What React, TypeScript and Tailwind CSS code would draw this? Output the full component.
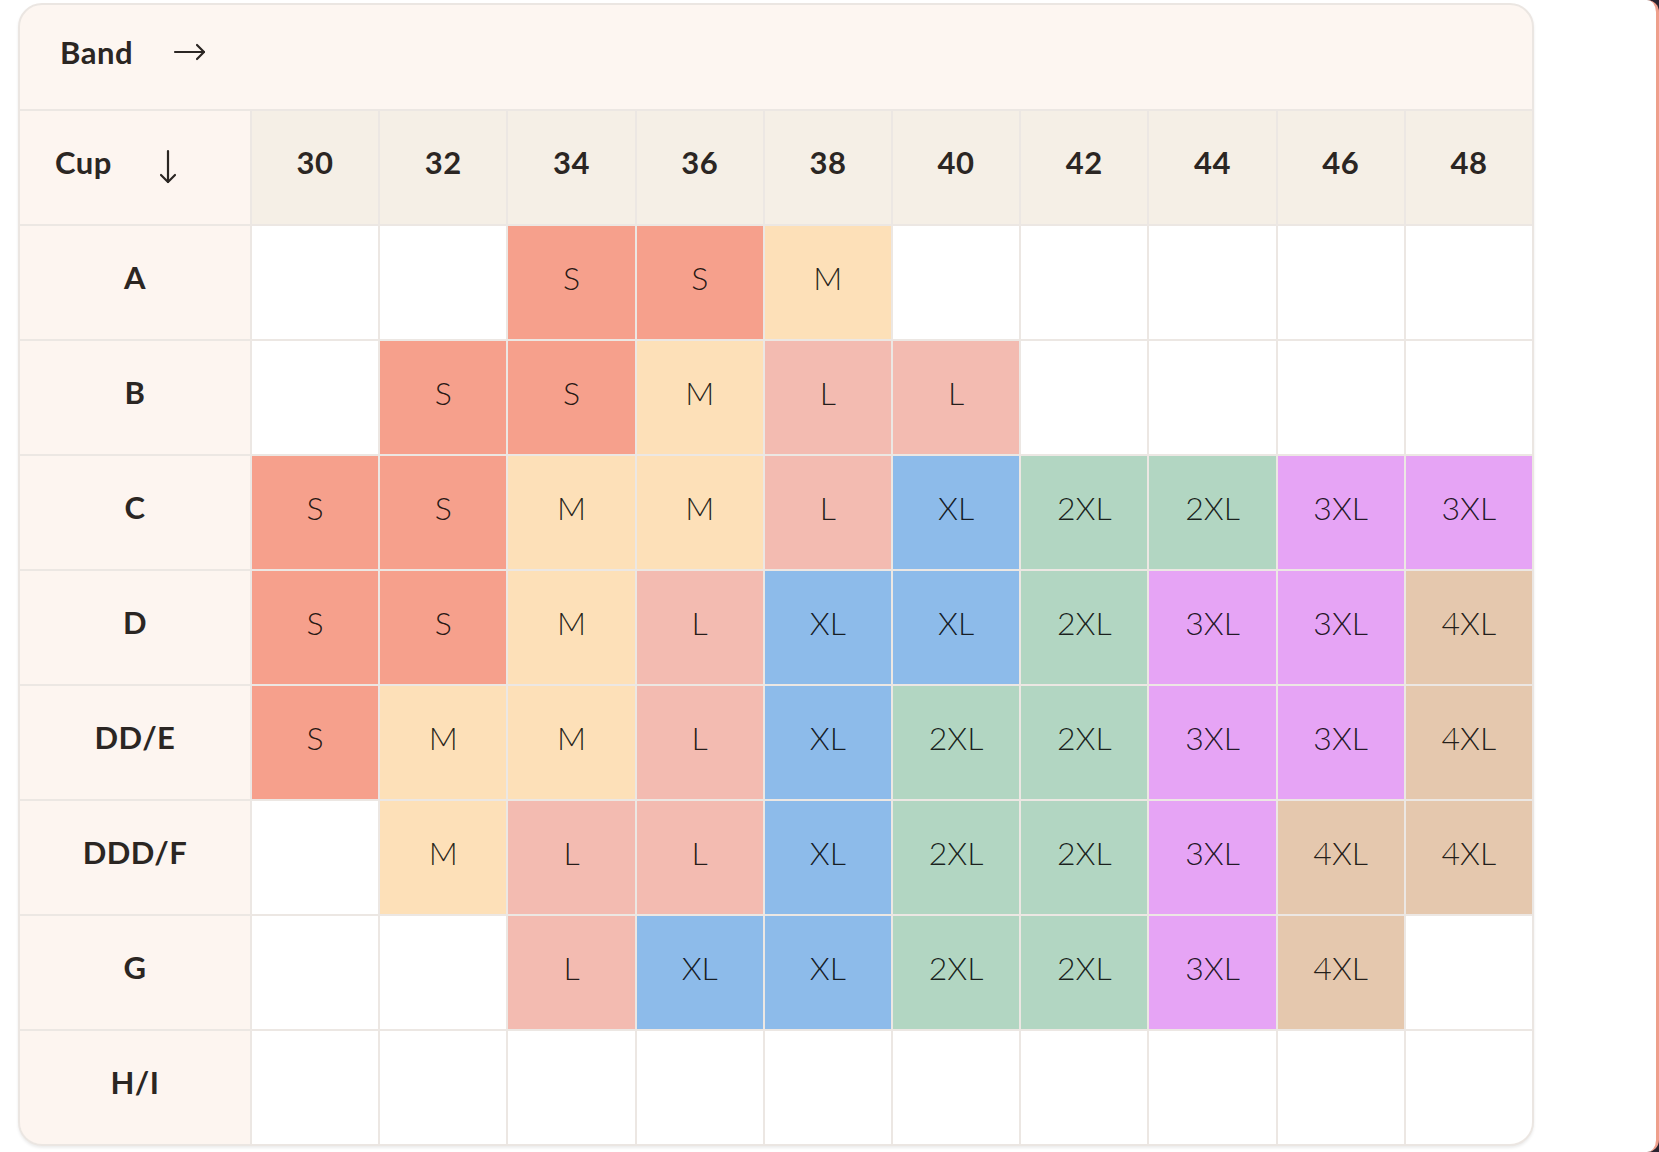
import React from "react";

const bands = ["30", "32", "34", "36", "38", "40", "42", "44", "46", "48"];

const rows: { cup: string; sizes: string[] }[] = [
  { cup: "A", sizes: ["", "", "S", "S", "M", "", "", "", "", ""] },
  { cup: "B", sizes: ["", "S", "S", "M", "L", "L", "", "", "", ""] },
  { cup: "C", sizes: ["S", "S", "M", "M", "L", "XL", "2XL", "2XL", "3XL", "3XL"] },
  { cup: "D", sizes: ["S", "S", "M", "L", "XL", "XL", "2XL", "3XL", "3XL", "4XL"] },
  { cup: "DD/E", sizes: ["S", "M", "M", "L", "XL", "2XL", "2XL", "3XL", "3XL", "4XL"] },
  { cup: "DDD/F", sizes: ["", "M", "L", "L", "XL", "2XL", "2XL", "3XL", "4XL", "4XL"] },
  { cup: "G", sizes: ["", "", "L", "XL", "XL", "2XL", "2XL", "3XL", "4XL", ""] },
  { cup: "H/I", sizes: ["", "", "", "", "", "", "", "", "", ""] },
];

const sizeColors: Record<string, string> = {
  S: "bg-[#f6a08c]",
  M: "bg-[#fde0b8]",
  L: "bg-[#f3bbb1]",
  XL: "bg-[#8dbbea]",
  "2XL": "bg-[#b2d6c2]",
  "3XL": "bg-[#e6a4f5]",
  "4XL": "bg-[#e5c8ae]",
};

function ArrowRight() {
  return (
    <svg width="34" height="18" viewBox="0 0 34 18" fill="none" stroke="#2b2623" strokeWidth="2.2" strokeLinecap="round" strokeLinejoin="round">
      <path d="M2 9h29" />
      <path d="M24 2l7 7-7 7" />
    </svg>
  );
}

function ArrowDown() {
  return (
    <svg width="20" height="36" viewBox="0 0 20 36" fill="none" stroke="#2b2623" strokeWidth="2.2" strokeLinecap="round" strokeLinejoin="round">
      <path d="M10 2v31" />
      <path d="M3 26l7 7 7-7" />
    </svg>
  );
}

export default function App() {
  return (
    <div className="min-h-[1152px] w-[1659px] bg-[#2a2430]" style={{ fontFamily: "Lato, 'Open Sans', sans-serif" }}>
      <div className="min-h-[1152px] bg-white rounded-tr-[12px] rounded-br-[12px] border-r-[3px] border-[#ef9f8c] pl-[18px] pt-[3px]">
        <div className="w-[1516px] rounded-[24px] border-2 border-[#ebe6e2] bg-[#fdf6f1] overflow-hidden shadow-[0_2px_3px_rgba(0,0,0,0.08)]">
          <div className="h-[104px] flex items-center gap-[40px] pl-[40px] pb-[10px]">
            <span className="text-[31px] font-bold text-[#2b2623] tracking-[0.5px]">Band</span>
            <ArrowRight />
          </div>
          <div className="grid grid-cols-[230px_repeat(10,1fr)] auto-rows-[113px] gap-[2px] bg-[#ece7e3] pt-[2px]">
            <div className="bg-[#fdf5f0] flex items-center pl-[35px] gap-[46px] pb-[10px]">
              <span className="text-[31px] font-bold text-[#2b2623] tracking-[0.5px]">Cup</span>
              <span className="pt-[8px]">
                <ArrowDown />
              </span>
            </div>
            {bands.map((b) => (
              <div key={b} className="bg-[#f5efe6] flex items-center justify-center pb-[10px] text-[31px] font-bold text-[#2b2623] tracking-[0.5px]">
                {b}
              </div>
            ))}
            {rows.map((row) => (
              <React.Fragment key={row.cup}>
                <div className="bg-[#fdf5f0] flex items-center justify-center pb-[10px] text-[31px] font-bold text-[#2b2623] tracking-[0.5px]">
                  {row.cup}
                </div>
                {row.sizes.map((s, i) => (
                  <div
                    key={row.cup + i}
                    className={`flex items-center justify-center pb-[10px] text-[32px] font-light text-black/85 ${s ? sizeColors[s] : "bg-white"}`}
                  >
                    {s}
                  </div>
                ))}
              </React.Fragment>
            ))}
          </div>
        </div>
      </div>
    </div>
  );
}
